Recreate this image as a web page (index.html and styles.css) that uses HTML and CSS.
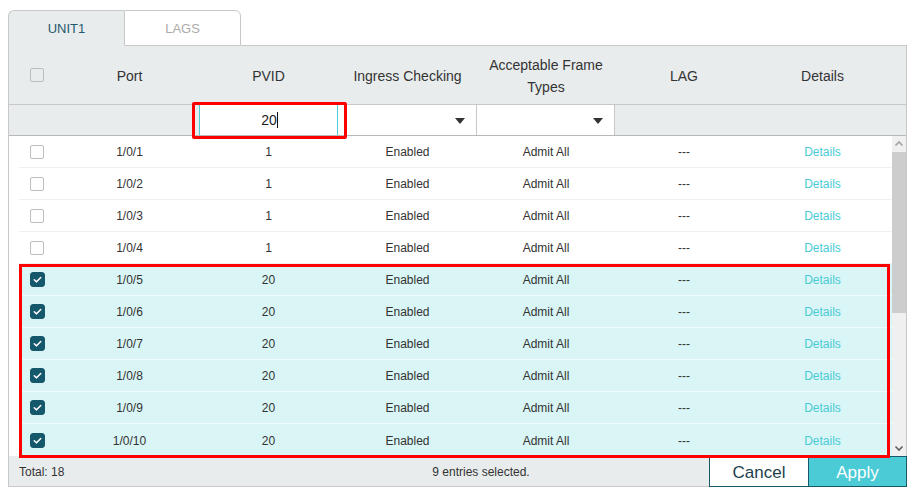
FILE: index.html
```html
<!DOCTYPE html>
<html>
<head>
<meta charset="utf-8">
<link rel="stylesheet" href="styles.css">
</head>
<body>
<div class="page">
  <div class="tabs">
    <div class="tab active">UNIT1</div>
    <div class="tab inactive">LAGS</div>
    <div class="tab-fill"></div>
  </div>
  <div class="panel">
    <div class="head">
      <div class="hcell cbcell"><span class="cb head-cb"></span></div>
      <div class="hcell">Port</div>
      <div class="hcell">PVID</div>
      <div class="hcell">Ingress Checking</div>
      <div class="hcell two">Acceptable Frame<br>Types</div>
      <div class="hcell">LAG</div>
      <div class="hcell">Details</div>
      <div class="hcell"></div>
    </div>
    <div class="filter">
      <div class="fcell"></div>
      <div class="fcell"></div>
      <div class="fcell input"><span class="typed">20</span></div>
      <div class="fcell select"><span class="arrow"></span></div>
      <div class="fcell select sep"><span class="arrow"></span></div>
      <div class="fcell"></div>
      <div class="fcell"></div>
      <div class="fcell"></div>
    </div>
    <div class="body">
      <div class="rows">
        <div class="row"><div class="c cbc"><span class="cb"></span></div><div class="c">1/0/1</div><div class="c">1</div><div class="c">Enabled</div><div class="c">Admit All</div><div class="c">---</div><div class="c link">Details</div></div>
        <div class="row"><div class="c cbc"><span class="cb"></span></div><div class="c">1/0/2</div><div class="c">1</div><div class="c">Enabled</div><div class="c">Admit All</div><div class="c">---</div><div class="c link">Details</div></div>
        <div class="row"><div class="c cbc"><span class="cb"></span></div><div class="c">1/0/3</div><div class="c">1</div><div class="c">Enabled</div><div class="c">Admit All</div><div class="c">---</div><div class="c link">Details</div></div>
        <div class="row"><div class="c cbc"><span class="cb"></span></div><div class="c">1/0/4</div><div class="c">1</div><div class="c">Enabled</div><div class="c">Admit All</div><div class="c">---</div><div class="c link">Details</div></div>
        <div class="row sel"><div class="c cbc"><span class="cb on"><svg viewBox="0 0 16 16"><path d="M4 8.3l2.6 2.6L12 5.6" fill="none" stroke="#fff" stroke-width="1.8" stroke-linecap="round" stroke-linejoin="round"/></svg></span></div><div class="c">1/0/5</div><div class="c">20</div><div class="c">Enabled</div><div class="c">Admit All</div><div class="c">---</div><div class="c link">Details</div></div>
        <div class="row sel"><div class="c cbc"><span class="cb on"><svg viewBox="0 0 16 16"><path d="M4 8.3l2.6 2.6L12 5.6" fill="none" stroke="#fff" stroke-width="1.8" stroke-linecap="round" stroke-linejoin="round"/></svg></span></div><div class="c">1/0/6</div><div class="c">20</div><div class="c">Enabled</div><div class="c">Admit All</div><div class="c">---</div><div class="c link">Details</div></div>
        <div class="row sel"><div class="c cbc"><span class="cb on"><svg viewBox="0 0 16 16"><path d="M4 8.3l2.6 2.6L12 5.6" fill="none" stroke="#fff" stroke-width="1.8" stroke-linecap="round" stroke-linejoin="round"/></svg></span></div><div class="c">1/0/7</div><div class="c">20</div><div class="c">Enabled</div><div class="c">Admit All</div><div class="c">---</div><div class="c link">Details</div></div>
        <div class="row sel"><div class="c cbc"><span class="cb on"><svg viewBox="0 0 16 16"><path d="M4 8.3l2.6 2.6L12 5.6" fill="none" stroke="#fff" stroke-width="1.8" stroke-linecap="round" stroke-linejoin="round"/></svg></span></div><div class="c">1/0/8</div><div class="c">20</div><div class="c">Enabled</div><div class="c">Admit All</div><div class="c">---</div><div class="c link">Details</div></div>
        <div class="row sel"><div class="c cbc"><span class="cb on"><svg viewBox="0 0 16 16"><path d="M4 8.3l2.6 2.6L12 5.6" fill="none" stroke="#fff" stroke-width="1.8" stroke-linecap="round" stroke-linejoin="round"/></svg></span></div><div class="c">1/0/9</div><div class="c">20</div><div class="c">Enabled</div><div class="c">Admit All</div><div class="c">---</div><div class="c link">Details</div></div>
        <div class="row sel last"><div class="c cbc"><span class="cb on"><svg viewBox="0 0 16 16"><path d="M4 8.3l2.6 2.6L12 5.6" fill="none" stroke="#fff" stroke-width="1.8" stroke-linecap="round" stroke-linejoin="round"/></svg></span></div><div class="c">1/0/10</div><div class="c">20</div><div class="c">Enabled</div><div class="c">Admit All</div><div class="c">---</div><div class="c link">Details</div></div>
      </div>
      <div class="scrollbar">
        <div class="sb-btn"><svg viewBox="0 0 14 16"><path d="M3.5 9.5L7 6l3.5 3.5" fill="none" stroke="#a3a3a3" stroke-width="1.6"/></svg></div>
        <div class="sb-thumb"></div>
        <div class="sb-track"></div>
        <div class="sb-btn"><svg viewBox="0 0 14 16"><path d="M3.5 6.5L7 10l3.5-3.5" fill="none" stroke="#606060" stroke-width="1.6"/></svg></div>
      </div>
    </div>
    <div class="foot">
      <div class="total">Total: 18</div>
      <div class="selected">9 entries selected.</div>
      <button class="btn cancel">Cancel</button>
      <button class="btn apply">Apply</button>
    </div>
  </div>
  <div class="mark mark-input"></div>
  <div class="mark mark-rows"></div>
</div>
</body>
</html>
```

FILE: styles.css
```css
* { box-sizing: border-box; }
body {
  margin: 0;
  background: #fff;
  font-family: "Liberation Sans", Arial, sans-serif;
  color: #333;
}
.page {
  position: relative;
  padding: 10px 0 0 8px;
  width: 907px;
}
.tabs {
  display: flex;
  height: 36px;
}
.tab {
  width: 116px;
  display: flex;
  align-items: center;
  justify-content: center;
  font-size: 13px;
  border: 1px solid #c8c8c8;
}
.tab.active {
  background: #e9eced;
  color: #1d5a6c;
  border-right: none;
  border-bottom: none;
  border-radius: 6px 0 0 0;
}
.tab.inactive {
  width: 117px;
  background: #fff;
  color: #aaa;
  border-radius: 0 6px 0 0;
}
.tab-fill {
  flex: 1;
  border-bottom: 1px solid #c8c8c8;
}
.panel {
  width: 899px;
  border: 1px solid #c8c8c8;
  border-top: none;
}
.head, .filter {
  display: grid;
  grid-template-columns: 51px 139px 139px 139px 138px 138px 139px 1fr;
  background: #e9eced;
  border-bottom: 1px solid #c8c8c8;
}
.head { height: 59px; padding-top: 2px; }
.hcell {
  display: flex;
  align-items: center;
  justify-content: center;
  text-align: center;
  font-size: 14px;
  line-height: 22px;
  color: #333;
}
.hcell.cbcell { justify-content: flex-start; padding-left: 21px; padding-bottom: 2px; }
.filter { height: 31px; border-bottom-color: #b8b8b8; }
.fcell { position: relative; }
.fcell.input {
  background: #fff;
  border-left: 1px solid #4acbd6;
  border-right: 1px solid #4acbd6;
  display: flex;
  align-items: center;
  justify-content: center;
  font-size: 14px;
  color: #222;
}
.typed {
  border-right: 1px solid #111;
  line-height: 16px;
  margin-left: 2px;
}
.fcell.select {
  background: #fff;
  border-right: 1px solid #c8c8c8;
}
.arrow {
  position: absolute;
  right: 11px;
  top: 13px;
  width: 0;
  height: 0;
  border-left: 5px solid transparent;
  border-right: 5px solid transparent;
  border-top: 6px solid #333;
}
.cb {
  display: inline-block;
  width: 14px;
  height: 14px;
  border: 1px solid #bdbdbd;
  border-radius: 2px;
  background: #fff;
}
.cb.head-cb { background: #e9eced; }
.cb.on {
  background: #16586b;
  border-color: #16586b;
  border-radius: 3px;
  width: 15px;
  height: 15px;
  display: flex;
  align-items: center;
  justify-content: center;
}
.cb.on svg { width: 15px; height: 15px; display: block; }
.body {
  display: flex;
  height: 320px;
}
.rows {
  flex: 1;
  padding-left: 10px;
  background: #fff;
}
.row {
  display: grid;
  grid-template-columns: 41px 139px 139px 139px 138px 138px 139px;
  height: 32px;
  padding-top: 1px;
  border-bottom: 1px solid #f0f0f0;
  align-items: center;
  font-size: 12px;
  color: #333;
}
.row.sel {
  background: #d9f5f5;
  border-bottom-color: #f2fbfb;
}
.row.last { border-bottom: none; }
.c { text-align: center; }
.c.cbc {
  text-align: left;
  padding-left: 11px;
  display: flex;
  align-items: center;
  margin-top: -1px;
}
.c.link { color: #4acbd6; }
.scrollbar {
  width: 14px;
  display: flex;
  flex-direction: column;
  background: #f0f0f0;
}
.sb-btn { height: 16px; }
.sb-btn svg { width: 14px; height: 16px; display: block; }
.sb-thumb { height: 161px; background: #cdcdcd; }
.sb-track { flex: 1; }
.foot {
  display: flex;
  align-items: center;
  height: 30px;
  background: #e9eced;
  font-size: 12px;
  color: #333;
}
.total { width: 244px; padding-left: 10px; padding-top: 1px; }
.selected { flex: 1; text-align: center; padding-top: 1px; }
.btn {
  height: 31px;
  width: 99px;
  margin-top: 1px;
  font-family: "Liberation Sans", Arial, sans-serif;
  font-size: 17px;
  border: 1px solid #1a5868;
  padding: 2px 0 0 0;
}
.btn.cancel { background: #fff; color: #1d3f4b; border-right: none; }
.btn.apply { background: #4acbd6; color: #fff; margin-right: -1px; width: 99px; }
.mark {
  position: absolute;
  border: 3px solid #f00;
  pointer-events: none;
}
.mark-input { left: 192px; top: 102px; width: 155px; height: 37px; border-radius: 2px; }
.mark-rows { left: 19px; top: 264px; width: 871px; height: 194px; }
```
